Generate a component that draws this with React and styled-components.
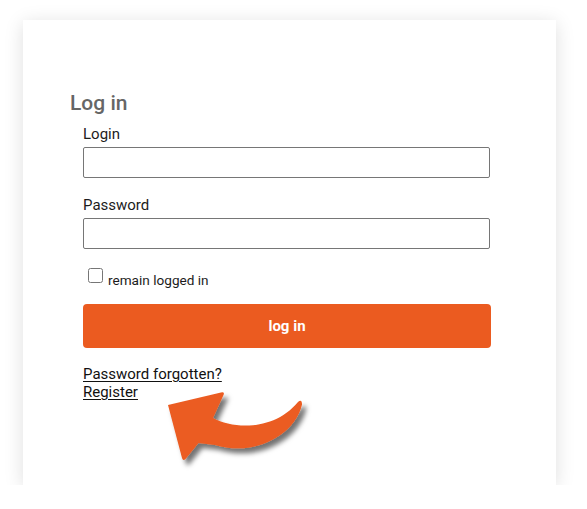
import React from 'react';
import styled, { createGlobalStyle } from 'styled-components';

const GlobalStyle = createGlobalStyle`
  html, body {
    margin: 0;
    padding: 0;
    background: #fff;
    font-family: Roboto, "Liberation Sans", Arial, sans-serif;
  }
`;

const Page = styled.div`
  padding: 20px 0 0 23px;
`;

const Card = styled.div`
  position: relative;
  box-sizing: border-box;
  width: 533px;
  height: 465px;
  background: #fff;
  box-shadow: 0 3px 18px rgba(0, 0, 0, 0.13);
  padding: 71px 0 0 47px;
`;

const Heading = styled.h2`
  margin: 0;
  font-size: 21px;
  line-height: 24px;
  font-weight: 500;
  color: #666;
`;

const Form = styled.form`
  display: flex;
  flex-direction: column;
  width: 408px;
  margin: 10px 0 0 13px;
`;

const Label = styled.label`
  font-size: 15px;
  line-height: 18px;
  color: #1c1c1c;
  margin-top: ${props => (props.first ? '0' : '18px')};
`;

const Input = styled.input`
  box-sizing: border-box;
  width: 407px;
  height: 31px;
  margin-top: 4px;
  border: 1px solid #767676;
  border-radius: 2px;
  outline: none;
  font: inherit;
`;

const CheckRow = styled.label`
  display: flex;
  align-items: flex-start;
  margin: 19px 0 0 5px;
  font-size: 13.6px;
  line-height: 18px;
  color: #1c1c1c;
`;

const Check = styled.input`
  width: 15px;
  height: 15px;
  margin: 0 5px 0 0;
  accent-color: #767676;
`;

const CheckText = styled.span`
  margin-top: 3px;
`;

const Button = styled.button`
  margin-top: 15px;
  width: 408px;
  height: 44px;
  border: 0;
  border-radius: 4px;
  background: #eb5b20;
  color: #fff;
  font: inherit;
  font-size: 15px;
  font-weight: 700;
  cursor: pointer;
`;

const Links = styled.div`
  display: flex;
  flex-direction: column;
  align-items: flex-start;
  margin-top: 17px;
`;

const Link = styled.a`
  font-size: 15px;
  line-height: 18px;
  color: #111;
  text-decoration: underline;
  text-underline-offset: 2px;
`;

const Arrow = styled.svg`
  position: absolute;
  left: 137px;
  top: 365px;
  overflow: visible;
`;

const CurvedArrow = () => (
  <Arrow width="160" height="100" viewBox="0 0 160 100">
    <defs>
      <filter id="arrowShadow" x="-20%" y="-20%" width="150%" height="160%">
        <feDropShadow dx="4" dy="5" stdDeviation="2.5" floodColor="#000" floodOpacity="0.55" />
      </filter>
    </defs>
    <path
      filter="url(#arrowShadow)"
      fill="#eb5b20"
      d="M8,20 L61,7.5 Q65,6.8 63.5,10 L53,33 C75,45 115,45 138,17 Q142,13.5 142,19.5 C135,50 95,72 55,60 L38.5,58 L25.5,74 Q23,76.5 22,73 Z"
    />
  </Arrow>
);

export default function App() {
  return (
    <Page>
      <GlobalStyle />
      <Card>
        <Heading>Log in</Heading>
        <Form onSubmit={e => e.preventDefault()}>
          <Label first htmlFor="login">Login</Label>
          <Input id="login" type="text" />
          <Label htmlFor="password">Password</Label>
          <Input id="password" type="password" />
          <CheckRow>
            <Check type="checkbox" />
            <CheckText>remain logged in</CheckText>
          </CheckRow>
          <Button type="submit">log in</Button>
          <Links>
            <Link href="#">Password forgotten?</Link>
            <Link href="#">Register</Link>
          </Links>
        </Form>
        <CurvedArrow />
      </Card>
    </Page>
  );
}
